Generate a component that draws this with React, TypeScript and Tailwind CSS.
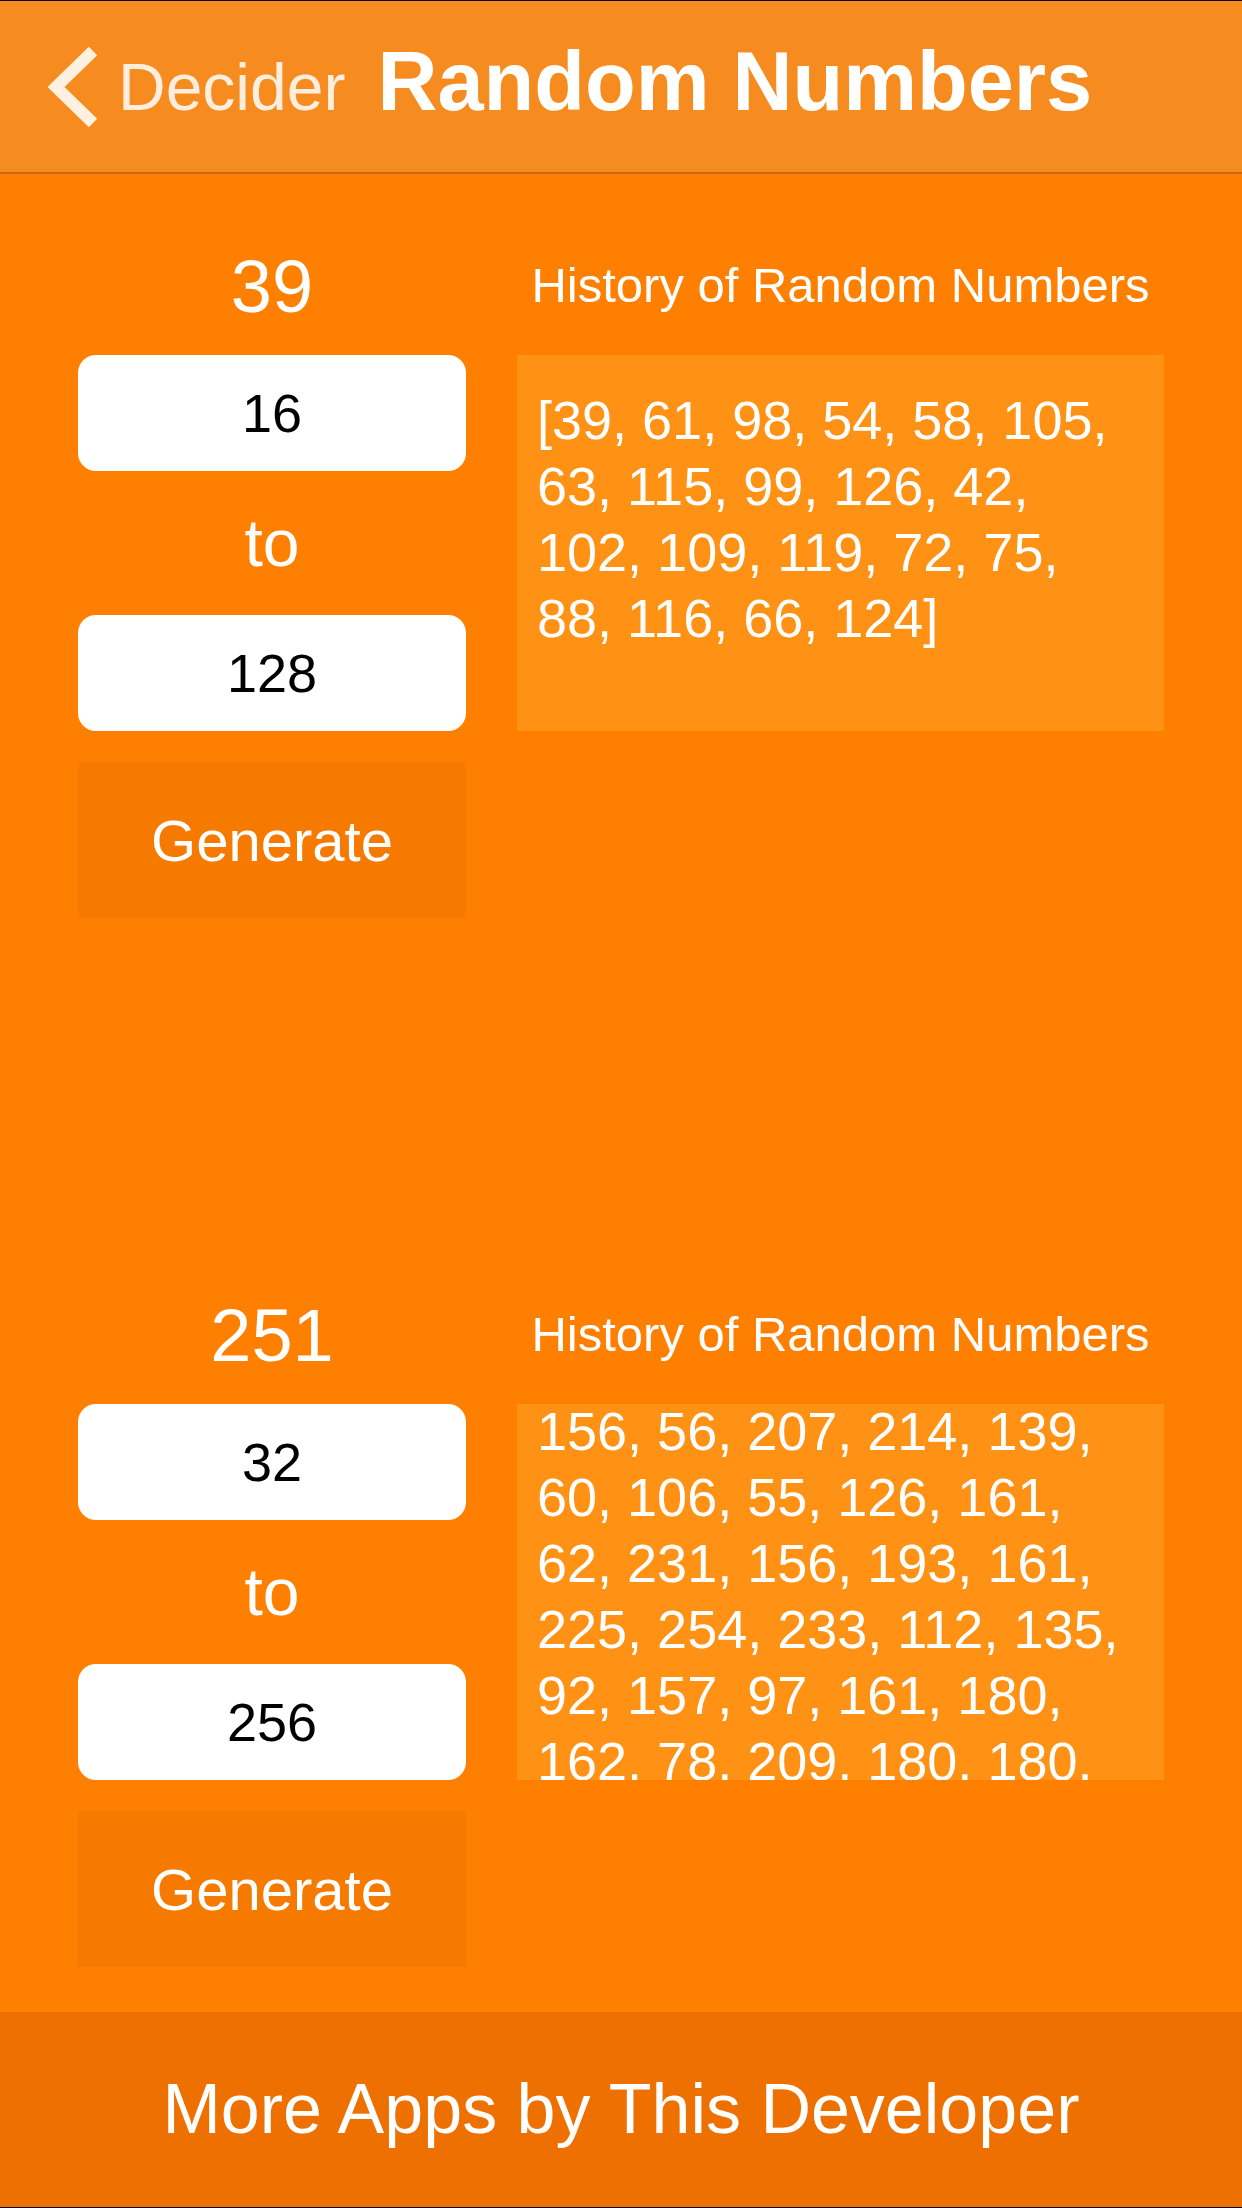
// Random Numbers screen — two generator blocks with history panels

interface GeneratorProps {
  value: string;
  from: string;
  to: string;
  history: string;
  scrolled?: boolean;
}

function Generator({ value, from, to, history, scrolled = false }: GeneratorProps) {
  return (
    <section className="flex gap-[51px] pl-[78px]">
      {/* left: result + range inputs */}
      <div className="flex w-[388px] flex-col">
        <div className="h-[74px] text-center text-[74px] leading-[74px] text-white">{value}</div>
        <div className="mt-[31px] flex h-[116px] items-center justify-center rounded-[18px] bg-white text-[54px] text-black">
          {from}
        </div>
        <div className="flex h-[144px] items-center justify-center text-[66px] leading-none text-white">to</div>
        <div className="flex h-[116px] items-center justify-center rounded-[18px] bg-white text-[54px] text-black">
          {to}
        </div>
        <button className="mt-[31px] flex h-[156px] items-center justify-center bg-[#F77A00] text-[58px] text-white">
          Generate
        </button>
      </div>

      {/* right: history */}
      <div className="flex w-[647px] flex-col">
        <div className="mt-[11px] h-[48px] whitespace-nowrap text-center text-[49px] leading-[48px] text-white">
          History of Random Numbers
        </div>
        <div className="mt-[46px] h-[376px] overflow-hidden bg-[#FF9114] pl-[20px]">
          <p
            className={`w-[600px] text-[54px] leading-[66px] text-white ${scrolled ? '-mt-[6px]' : 'pt-[32px]'}`}
          >
            {history}
          </p>
        </div>
      </div>
    </section>
  );
}

export default function App() {
  return (
    <div className="flex h-[2208px] w-[1242px] flex-col overflow-hidden bg-[#FF8000] font-['Liberation_Sans',Arial,sans-serif]">
      <div className="h-px bg-black" />

      {/* nav bar */}
      <header className="flex h-[173px] items-center border-b-2 border-[#C96A12] bg-[#F68B20] pl-[48px]">
        <svg width="50" height="82" viewBox="0 0 50 82" fill="none" className="shrink-0">
          <path d="M45 5 L8 41 L45 77" stroke="#FFF0E0" strokeWidth="12" strokeLinejoin="miter" />
        </svg>
        <div className="mb-[10px] ml-[20px] flex items-baseline leading-none">
          <span className="text-[66px] text-[#FFEEDD]">Decider</span>
          <span className="ml-[32px] text-[83px] font-bold text-white">Random Numbers</span>
        </div>
      </header>

      <main className="flex flex-col pt-[76px]">
        <Generator
          value="39"
          from="16"
          to="128"
          history="[39, 61, 98, 54, 58, 105, 63, 115, 99, 126, 42, 102, 109, 119, 72, 75, 88, 116, 66, 124]"
        />
        <div className="h-[381px]" />
        <Generator
          value="251"
          from="32"
          to="256"
          scrolled
          history="156, 56, 207, 214, 139, 60, 106, 55, 126, 161, 62, 231, 156, 193, 161, 225, 254, 233, 112, 135, 92, 157, 97, 161, 180, 162, 78, 209, 180, 180, 243, 71, 198, 64]"
        />
      </main>

      <footer className="mt-[45px] flex h-[195px] items-center justify-center bg-[#EE7000] text-[70px] text-white">
        More Apps by This Developer
      </footer>
      <div className="h-px bg-black" />
    </div>
  );
}
